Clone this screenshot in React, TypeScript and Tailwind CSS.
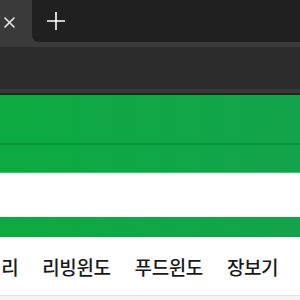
import React from 'react';

const menu = ['럭셔리', '리빙윈도', '푸드윈도', '장보기'];

const App = () => {
  return (
    <div className="w-[300px] h-[300px] overflow-hidden bg-[#f4f4f4] font-['Noto_Sans_CJK_KR','Noto_Sans',sans-serif]">
      {/* tab strip */}
      <div className="flex h-[42px] bg-[#3a3a3a]">
        <div className="w-[32px] flex items-center pl-[4px] pt-[2px]">
          <svg width="11" height="11" viewBox="0 0 11 11" className="text-[#e8e8e8]">
            <path d="M1 1L10 10M10 1L1 10" stroke="currentColor" strokeWidth="1.6" strokeLinecap="round" />
          </svg>
        </div>
        <div className="flex-1 flex items-center bg-[#202020] rounded-bl-[7px] pl-[14px]">
          <svg width="20" height="20" viewBox="0 0 20 20" className="text-white">
            <path d="M10 1V19M1 10H19" stroke="currentColor" strokeWidth="1.6" />
          </svg>
        </div>
      </div>

      {/* toolbar */}
      <div className="h-[5px] bg-[#3a3a3a]" />
      <div className="h-[42px] bg-[#2c2c2c]" />
      <div className="h-[4px] bg-[#393939]" />
      <div className="h-[2px] bg-[#242424]" />

      {/* header */}
      <div className="bg-gradient-to-r from-[#0caa40] to-[#13a34c]">
        <div className="h-[48px]" />
        <div className="h-[2px] bg-[#0a973b]" />
        <div className="h-[27px]" />
        <div className="h-[1px] bg-[#2fcb5f]" />
      </div>

      <div className="h-[44px] bg-white" />
      <div className="h-[20px] bg-gradient-to-r from-[#0caa40] to-[#13a34c]" />

      {/* menu */}
      <div className="h-[59px] bg-white border-b border-[#e2e2e2] flex items-center overflow-hidden">
        <div className="flex gap-[24px] -ml-[33px] whitespace-nowrap text-[19px] tracking-[-0.4px] font-medium text-[#1a1a1a] leading-none">
          {menu.map((m) => (
            <span key={m}>{m}</span>
          ))}
        </div>
      </div>
    </div>
  );
};

export default App;
